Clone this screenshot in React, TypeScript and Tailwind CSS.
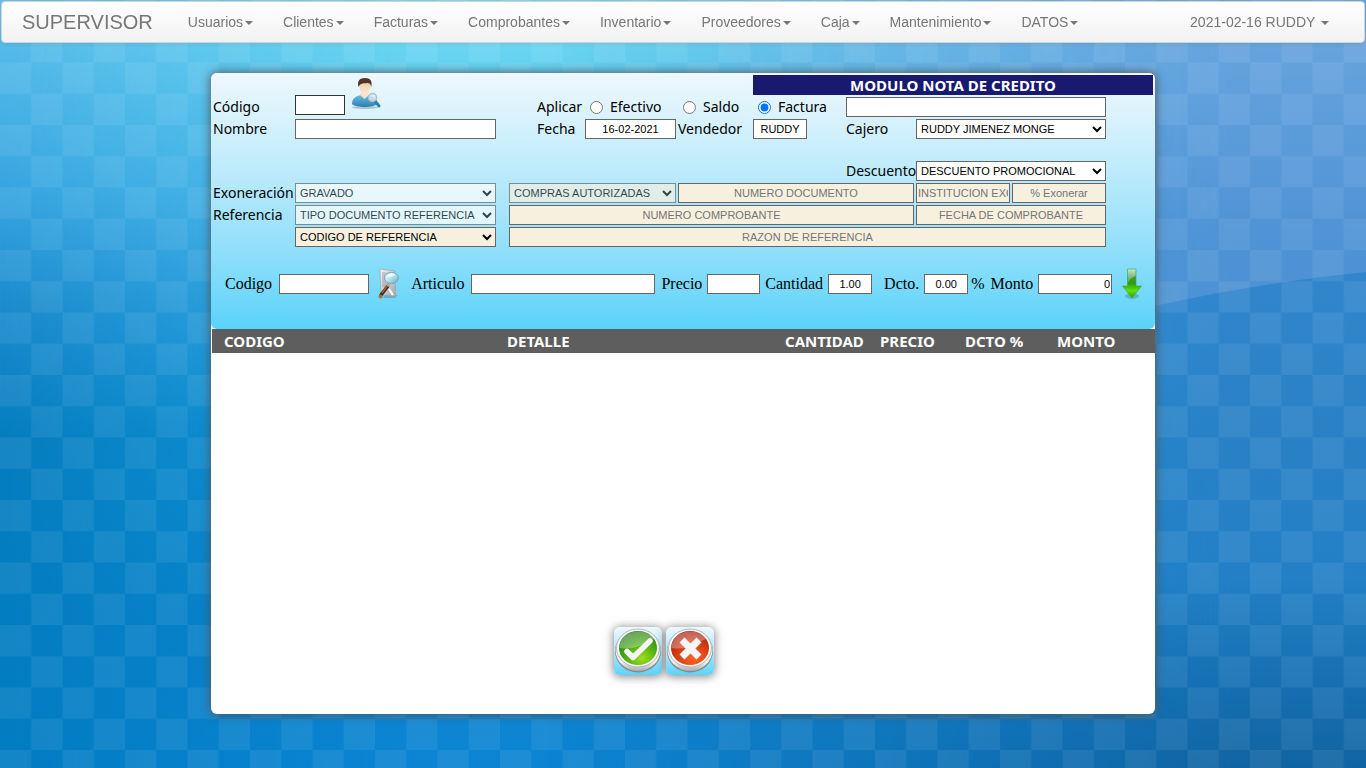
import type { ReactNode } from "react";

const menus = [
  "Usuarios",
  "Clientes",
  "Facturas",
  "Comprobantes",
  "Inventario",
  "Proveedores",
  "Caja",
  "Mantenimiento",
  "DATOS",
];

const field =
  "w-full min-w-0 h-5 border border-[#666] bg-white px-[1px] text-[11px] text-black placeholder:text-[#757575] font-['Liberation_Sans',Arial,sans-serif]";
const cream =
  "w-full min-w-0 h-5 border border-[#666] bg-[#f7f0df] px-[1px] text-[11px] text-center text-black placeholder:text-[#757575] font-['Liberation_Sans',Arial,sans-serif]";
const select =
  "w-full min-w-0 h-5 border border-[#666] bg-white text-[11px] text-black disabled:opacity-70 font-['Liberation_Sans',Arial,sans-serif]";
const creamSelect =
  "w-full min-w-0 h-5 border border-[#666] bg-[#f7f0df] text-[11px] text-black disabled:opacity-70 font-['Liberation_Sans',Arial,sans-serif]";

function Caret() {
  return (
    <span className="ml-[2px] inline-block h-0 w-0 border-x-4 border-t-4 border-x-transparent border-t-[#777] align-middle" />
  );
}

function Navbar() {
  return (
    <nav className="mx-px flex h-[42px] items-center justify-between rounded border border-[#d4d4d4] bg-gradient-to-b from-white to-[#f2f2f2] px-5 text-sm text-[#777] shadow-[0_1px_4px_rgba(0,0,0,0.07)]">
      <div className="flex items-center">
        <a href="#" className="mr-5 text-xl leading-5">
          SUPERVISOR
        </a>
        {menus.map((m) => (
          <a key={m} href="#" className="px-[15px] leading-5 whitespace-nowrap">
            {m}
            <Caret />
          </a>
        ))}
      </div>
      <a href="#" className="px-[15px] leading-5 whitespace-nowrap">
        2021-02-16 RUDDY <Caret />
      </a>
    </nav>
  );
}

function Backdrop() {
  return (
    <svg
      className="fixed inset-0 -z-10 h-full w-full"
      viewBox="0 0 1366 768"
      preserveAspectRatio="none"
      aria-hidden="true"
    >
      <defs>
        <linearGradient id="left" x1="0" y1="0" x2="0" y2="1">
          <stop offset="0.05" stopColor="#56bbe9" />
          <stop offset="0.25" stopColor="#36a5e0" />
          <stop offset="0.4" stopColor="#1b8bcd" />
          <stop offset="0.57" stopColor="#057dbf" />
          <stop offset="1" stopColor="#027dc3" />
        </linearGradient>
        <linearGradient id="mid" x1="0" y1="0" x2="0" y2="1">
          <stop offset="0.05" stopColor="#6ad6f2" />
          <stop offset="0.3" stopColor="#48b8ea" />
          <stop offset="0.55" stopColor="#159ade" />
          <stop offset="0.8" stopColor="#0a86d0" />
          <stop offset="1" stopColor="#0c84d2" />
        </linearGradient>
        <linearGradient id="right" x1="0" y1="0" x2="0" y2="1">
          <stop offset="0.05" stopColor="#559fda" />
          <stop offset="0.3" stopColor="#3487ce" />
          <stop offset="0.55" stopColor="#2a81c5" />
          <stop offset="0.75" stopColor="#2380c6" />
          <stop offset="0.9" stopColor="#156eb0" />
          <stop offset="1" stopColor="#1164a2" />
        </linearGradient>
        <linearGradient id="fadeMid" x1="0" y1="0" x2="1" y2="0">
          <stop offset="0" stopColor="#fff" stopOpacity="0" />
          <stop offset="0.3" stopColor="#fff" />
        </linearGradient>
        <linearGradient id="fadeRight" x1="0" y1="0" x2="1" y2="0">
          <stop offset="0.4" stopColor="#fff" stopOpacity="0" />
          <stop offset="0.9" stopColor="#fff" />
        </linearGradient>
        <mask id="maskMid">
          <rect width="1366" height="768" fill="url(#fadeMid)" />
        </mask>
        <mask id="maskRight">
          <rect width="1366" height="768" fill="url(#fadeRight)" />
        </mask>
        <pattern id="checks" width="62.5" height="62.5" patternUnits="userSpaceOnUse">
          <rect width="31.25" height="31.25" fill="#fff" fillOpacity="0.07" />
          <rect x="31.25" y="31.25" width="31.25" height="31.25" fill="#fff" fillOpacity="0.07" />
        </pattern>
      </defs>
      <rect width="1366" height="768" fill="url(#left)" />
      <rect width="1366" height="768" fill="url(#mid)" mask="url(#maskMid)" />
      <rect width="1366" height="768" fill="url(#right)" mask="url(#maskRight)" />
      <path d="M0 0H1366V272Q1250 284 1155 306L900 370L700 0Z" fill="#92b0e8" fillOpacity="0.3" mask="url(#maskRight)" />
      <rect width="1366" height="768" fill="url(#checks)" />
    </svg>
  );
}

function PersonIcon() {
  return (
    <svg width="32" height="34" viewBox="0 0 32 34" aria-hidden="true">
      <defs>
        <linearGradient id="shirt" x1="0" y1="0" x2="0" y2="1">
          <stop offset="0" stopColor="#6cbbe2" />
          <stop offset="1" stopColor="#2b7fb3" />
        </linearGradient>
        <linearGradient id="skin" x1="0" y1="0" x2="0" y2="1">
          <stop offset="0" stopColor="#f0c9a0" />
          <stop offset="1" stopColor="#fbeadb" />
        </linearGradient>
      </defs>
      <ellipse cx="14" cy="31.5" rx="13" ry="1.5" fill="#567" fillOpacity="0.35" />
      <path d="M1 28C1 22 5 20 10 19H17C23 20 26 22 26 28C23 32 4 32 1 28Z" fill="url(#shirt)" />
      <path d="M9 19L13.500 23L18 19L16.500 15H10.500Z" fill="#f8e2cf" />
      <path d="M8 8C8 4 20 4 20 8C20 14 17.500 18 14 18S8 14 8 8Z" fill="url(#skin)" />
      <path d="M7.500 11C6 5 8.500 2 14 2S21.500 5 20.300 11C19.800 8 18.500 7 16.500 7C13.500 7.500 9.500 6.500 7.500 11Z" fill="#54342b" />
      <path d="M24 25L28 30" stroke="#2f7fb2" strokeWidth="3" strokeLinecap="round" />
      <circle cx="21.500" cy="21.500" r="4" fill="#d9eef7" fillOpacity="0.8" stroke="#b5bcc2" strokeWidth="1.500" />
    </svg>
  );
}

function SearchDocIcon() {
  return (
    <svg width="22" height="32" viewBox="0 0 22 32" aria-hidden="true">
      <defs>
        <linearGradient id="page" x1="0" y1="0" x2="1" y2="1">
          <stop offset="0" stopColor="#f4f4f6" />
          <stop offset="1" stopColor="#a4a6ac" />
        </linearGradient>
        <linearGradient id="lens" x1="0" y1="0" x2="1" y2="1">
          <stop offset="0" stopColor="#f4fcff" />
          <stop offset="0.5" stopColor="#b4e0f0" />
          <stop offset="1" stopColor="#4fa9cc" />
        </linearGradient>
      </defs>
      <path d="M8 27L21 27L18 30H6Z" fill="#356" fillOpacity="0.3" />
      <path d="M3 1L18 3L18.500 29L10 27L4 28Z" fill="url(#page)" stroke="#999ba3" strokeWidth="0.600" />
      <path d="M5 4L15 5V12L8 20L5 19Z" fill="#8f9299" fillOpacity="0.4" />
      <path d="M12 21L16 27" stroke="#fff" strokeWidth="2" />
      <path d="M10.500 18.500L4 27" stroke="#40291c" strokeWidth="3.500" strokeLinecap="round" />
      <path d="M10 18L5 25" stroke="#a06a40" strokeWidth="1.300" />
      <circle cx="3.500" cy="28.500" r="2" fill="#a8702f" />
      <path d="M12.500 15L10.500 18.500" stroke="#c2a568" strokeWidth="2" />
      <ellipse cx="14.500" cy="10" rx="7" ry="5.600" fill="url(#lens)" stroke="#7fa6b6" strokeWidth="1" />
      <path d="M9.500 9.500C10.500 5.500 15.500 4.500 18.500 6.500C15.500 8.500 12.500 8.500 9.500 9.500Z" fill="#fff" fillOpacity="0.8" />
    </svg>
  );
}

function DownArrowIcon() {
  return (
    <svg width="20" height="32" viewBox="0 0 20 32" aria-hidden="true">
      <defs>
        <linearGradient id="arrow" x1="0" y1="0" x2="0" y2="1">
          <stop offset="0" stopColor="#a9dcb8" />
          <stop offset="0.3" stopColor="#3f9a3f" />
          <stop offset="0.5" stopColor="#2f9a10" />
          <stop offset="0.75" stopColor="#5fe30c" />
          <stop offset="1" stopColor="#2f9412" />
        </linearGradient>
      </defs>
      <ellipse cx="10" cy="28" rx="7" ry="3" fill="#2a6d3a" fillOpacity="0.3" />
      <path d="M5.500 1H14V18L19.500 18L10 30L0.500 18L5.500 18Z" fill="url(#arrow)" stroke="#46a83a" strokeWidth="0.600" />
      <path d="M6 1.500H13.500V8C11 8.500 8 11 6 14Z" fill="#fff" fillOpacity="0.3" />
    </svg>
  );
}

function RoundIcon({ ok }: { ok: boolean }) {
  const id = ok ? "ok" : "no";
  return (
    <svg width="48" height="48" viewBox="0 0 48 48" aria-hidden="true">
      <defs>
        <radialGradient id={id} cx="0.6" cy="0.8" r="0.8">
          <stop offset="0" stopColor={ok ? "#9be01c" : "#ff6420"} />
          <stop offset="0.6" stopColor={ok ? "#45a512" : "#d23a12"} />
          <stop offset="1" stopColor={ok ? "#267f1c" : "#a32214"} />
        </radialGradient>
        <linearGradient id={id + "Rim"} x1="0" y1="0" x2="0" y2="1">
          <stop offset="0" stopColor="#fff" />
          <stop offset="0.8" stopColor="#eceeef" />
          <stop offset="1" stopColor="#a9acaf" />
        </linearGradient>
      </defs>
      <ellipse cx="24" cy="24" rx="23" ry="21.500" fill="#85898c" />
      <ellipse cx="24" cy="23" rx="22.500" ry="21" fill={"url(#" + id + "Rim)"} />
      <ellipse cx="24" cy="21" rx="21.500" ry="19" fill="#f8f8f8" stroke="#9b9fa2" strokeWidth="0.700" />
      <ellipse cx="24" cy="21" rx="19" ry="17" fill={"url(#" + id + ")"} />
      <path d="M5.500 21C6 9 16 4.500 24 4.500C31 4.500 37 7 40 12C31 15 23 24 5.500 21Z" fill="#fff" fillOpacity="0.3" />
      {ok ? (
        <path d="M13 24.500L19 30.500L36 14" fill="none" stroke="#f5f5f5" strokeWidth="5.500" strokeLinecap="round" strokeLinejoin="round" />
      ) : (
        <path d="M16 13L33 30M33 13L16 30" fill="none" stroke="#f5f5f5" strokeWidth="7" />
      )}
    </svg>
  );
}

function Label({ htmlFor, className, children }: { htmlFor: string; className: string; children: ReactNode }) {
  return (
    <label htmlFor={htmlFor} className={`${className} whitespace-nowrap`}>
      {children}
    </label>
  );
}

type AplicarProps = { id: string; label: string; className: string; checked?: boolean };

function Aplicar({ id, label, className, checked }: AplicarProps) {
  return (
    <div className={`${className} row-start-2 flex items-center gap-[7px] pl-[5px]`}>
      <input type="radio" id={id} name="aplicar" defaultChecked={checked} className="h-[13px] w-[13px] shrink-0" />
      <label htmlFor={id}>{label}</label>
    </div>
  );
}

function CreditForm() {
  return (
    <div className="grid grid-cols-[80px_minmax(0,201fr)_9px_26px_46px_91px_73px_91px_68px_94px_94px_45px] grid-rows-[20px_20px_20px_18px_20px_20px_20px_20px] gap-[2px] px-[2px] pt-[2px] font-['Noto_Sans',Tahoma,sans-serif] text-sm leading-5 text-black">
      <h1 className="col-start-8 col-end-13 row-start-1 bg-[#191970] text-center text-[15px] leading-5 font-bold text-white">
        MODULO NOTA DE CREDITO
      </h1>

      <Label htmlFor="codigo" className="col-start-1 row-start-2">Código</Label>
      <div className="col-start-2 row-span-2 row-start-1 flex items-end gap-[6px] pb-[2px]">
        <input id="codigo" className="h-5 w-[50px] border border-[#333] bg-white px-[1px] text-[11px]" />
        <button type="button" aria-label="Buscar cliente" className="mb-[5px]">
          <PersonIcon />
        </button>
      </div>
      <span className="col-start-5 row-start-2">Aplicar</span>
      <Aplicar id="efectivo" label="Efectivo" className="col-start-6" />
      <Aplicar id="saldo" label="Saldo" className="col-start-7" />
      <Aplicar id="factura" label="Factura" className="col-start-8" checked />
      <input aria-label="Número de factura" className={`${field} col-start-9 col-end-12 row-start-2`} />

      <Label htmlFor="nombre" className="col-start-1 row-start-3">Nombre</Label>
      <input id="nombre" className={`${field} col-start-2 row-start-3`} />
      <Label htmlFor="fecha" className="col-start-5 row-start-3">Fecha</Label>
      <input id="fecha" defaultValue="16-02-2021" className={`${field} col-start-6 row-start-3 text-center`} />
      <Label htmlFor="vendedor" className="col-start-7 row-start-3">Vendedor</Label>
      <div className="col-start-8 row-start-3 flex">
        <input id="vendedor" defaultValue="RUDDY" className={`${field} max-w-[54px] text-center`} />
      </div>
      <Label htmlFor="cajero" className="col-start-9 row-start-3">Cajero</Label>
      <select id="cajero" className={`${select} col-start-10 col-end-12 row-start-3`}>
        <option>RUDDY JIMENEZ MONGE</option>
      </select>

      <Label htmlFor="descuento" className="col-start-9 row-start-5">Descuento</Label>
      <select id="descuento" className={`${select} col-start-10 col-end-12 row-start-5`}>
        <option>DESCUENTO PROMOCIONAL</option>
      </select>

      <Label htmlFor="exoneracion" className="col-start-1 row-start-6">Exoneración</Label>
      <select id="exoneracion" disabled className={`${select} col-start-2 row-start-6`}>
        <option>GRAVADO</option>
      </select>
      <select aria-label="Tipo de exoneración" disabled className={`${creamSelect} col-start-4 col-end-7 row-start-6`}>
        <option>COMPRAS AUTORIZADAS</option>
      </select>
      <input placeholder="NUMERO DOCUMENTO" className={`${cream} col-start-7 col-end-10 row-start-6`} />
      <input placeholder="INSTITUCION EXONERA" className={`${cream} col-start-10 row-start-6`} />
      <input placeholder="% Exonerar" className={`${cream} col-start-11 row-start-6`} />

      <Label htmlFor="referencia" className="col-start-1 row-start-7">Referencia</Label>
      <select id="referencia" disabled className={`${select} col-start-2 row-start-7`}>
        <option>TIPO DOCUMENTO REFERENCIA</option>
      </select>
      <input placeholder="NUMERO COMPROBANTE" className={`${cream} col-start-4 col-end-10 row-start-7`} />
      <input placeholder="FECHA DE COMPROBANTE" className={`${cream} col-start-10 col-end-12 row-start-7`} />

      <select aria-label="Código de referencia" className={`${creamSelect} col-start-2 row-start-8`}>
        <option>CODIGO DE REFERENCIA</option>
      </select>
      <input placeholder="RAZON DE REFERENCIA" className={`${cream} col-start-4 col-end-12 row-start-8`} />
    </div>
  );
}

function LineForm() {
  return (
    <div className="mt-[21px] flex items-center pr-[13px] pl-[14px] font-['Liberation_Serif','Times_New_Roman',serif] text-base whitespace-nowrap text-black">
      <label htmlFor="linea-codigo">Codigo</label>
      <input id="linea-codigo" className={`${field} ml-[7px] max-w-[90px]`} />
      <button type="button" aria-label="Buscar artículo" className="ml-2 shrink-0">
        <SearchDocIcon />
      </button>
      <label htmlFor="articulo" className="ml-3">Articulo</label>
      <input id="articulo" className={`${field} ml-[7px] max-w-[184px]`} />
      <label htmlFor="precio" className="ml-[6px]">Precio</label>
      <input id="precio" className={`${field} ml-[5px] max-w-[53px]`} />
      <label htmlFor="cantidad" className="ml-[5px]">Cantidad</label>
      <input id="cantidad" defaultValue="1.00" className={`${field} ml-[5px] max-w-[44px] text-center`} />
      <label htmlFor="dcto" className="ml-3">Dcto.</label>
      <input id="dcto" defaultValue="0.00" className={`${field} ml-[5px] max-w-[44px] text-center`} />
      <span className="ml-[3px]">%</span>
      <label htmlFor="monto" className="ml-[6px]">Monto</label>
      <input id="monto" defaultValue="0" className={`${field} ml-[5px] max-w-[74px] text-right`} />
      <button type="button" aria-label="Agregar línea" className="ml-auto shrink-0">
        <DownArrowIcon />
      </button>
    </div>
  );
}

export default function App() {
  return (
    <div className="relative isolate min-h-screen pt-px font-['Liberation_Sans',Arial,sans-serif]">
      <Backdrop />
      <Navbar />
      <main className="mx-auto mt-[30px] mb-10 flex min-h-[641px] w-full max-w-[944px] flex-col overflow-hidden rounded-md bg-white shadow-[0_0_10px_1px_rgba(80,85,90,0.9)]">
        <section className="h-64 rounded-b-md bg-gradient-to-b from-[#eff8fc] to-[#59d3f9]">
          <CreditForm />
          <LineForm />
        </section>
        <table className="ml-px table-fixed border-collapse font-['Noto_Sans',Tahoma,sans-serif] text-[15px]">
          <thead>
            <tr className="h-6 bg-[#5e5e5e] text-left leading-6 text-white">
              <th className="w-[283px] pl-3">CODIGO</th>
              <th className="pl-3">DETALLE</th>
              <th className="w-[95px] pl-3">CANTIDAD</th>
              <th className="w-[85px] pl-3">PRECIO</th>
              <th className="w-[92px] pl-3">DCTO %</th>
              <th className="w-[110px] pl-3">MONTO</th>
            </tr>
          </thead>
        </table>
        <div className="mt-auto mb-[39px] flex gap-1 pl-[403px]">
          <button type="button" aria-label="Aceptar" className="rounded-md bg-gradient-to-b from-[#eff8fc] to-[#59d3f9] shadow-[0_1px_8px_1px_rgba(90,90,90,0.7)]">
            <RoundIcon ok />
          </button>
          <button type="button" aria-label="Cancelar" className="rounded-md bg-gradient-to-b from-[#eff8fc] to-[#59d3f9] shadow-[0_1px_8px_1px_rgba(90,90,90,0.7)]">
            <RoundIcon ok={false} />
          </button>
        </div>
      </main>
    </div>
  );
}
